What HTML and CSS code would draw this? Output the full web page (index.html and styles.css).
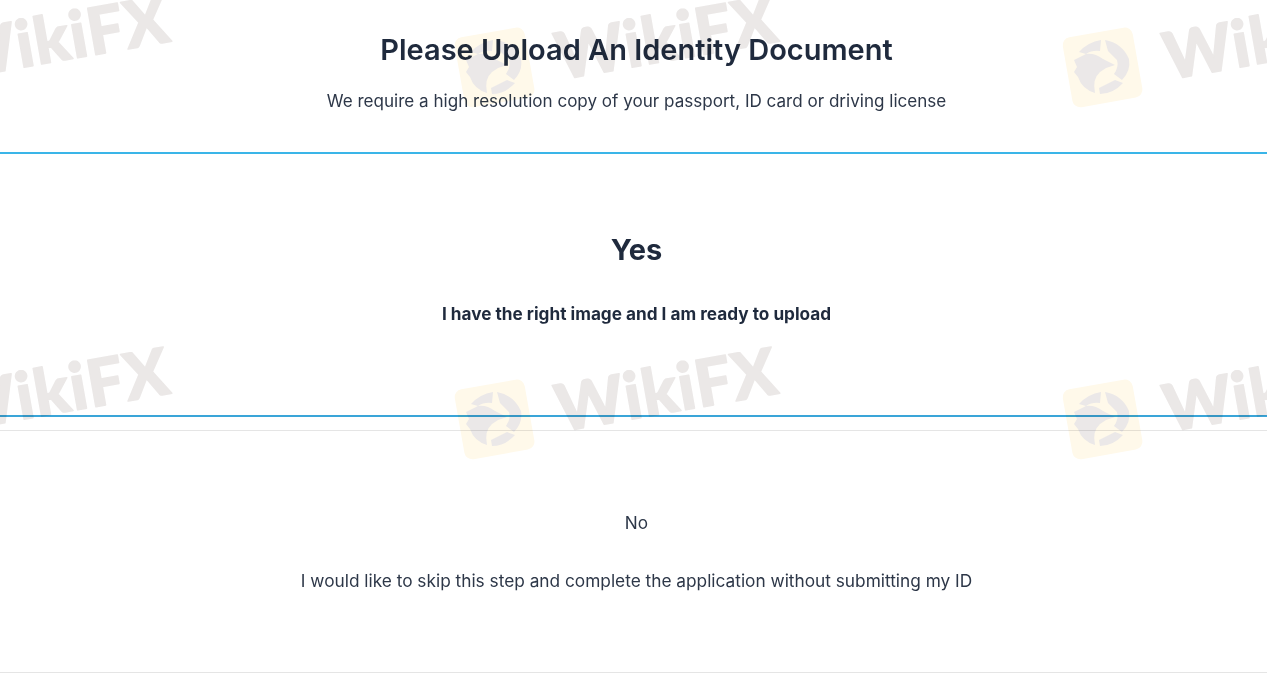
FILE: index.html
```html
<!DOCTYPE html>
<html lang="en">
<head>
<meta charset="utf-8">
<title>Please Upload An Identity Document</title>
<link rel="stylesheet" href="styles.css">
</head>
<body>
<main class="page">
  <header class="intro">
    <h1 class="intro-title">Please Upload An Identity Document</h1>
    <p class="intro-text">We require a high resolution copy of your passport, ID card or driving license</p>
  </header>
  <section class="choice choice-active">
    <h2 class="choice-title">Yes</h2>
    <p class="choice-text">I have the right image and I am ready to upload</p>
  </section>
  <section class="choice choice-plain">
    <h2 class="choice-title">No</h2>
    <p class="choice-text">I would like to skip this step and complete the application without submitting my ID</p>
  </section>
</main>
<svg class="watermark" width="1267" height="696" viewBox="0 0 1267 696" aria-hidden="true">
  <defs>
    <g id="wm">
      <rect x="5" y="5" width="71" height="71" rx="8" fill="#fff9ea" transform="rotate(-10 40 40)"/>
      <g fill="#ebe8e8">
        <path d="M17 25 Q26 15 39 13 L38 24 Q30 23 24 27 Z"/>
        <path d="M43 13 Q60 16 67 32 Q69 44 60 53 L52 47 Q57 40 55 33 L46 24 Z"/>
        <path d="M61 56 Q51 67 38 67 L37 61 L53 53 Z"/>
        <path d="M12 33 L24 27 Q33 26 41 32 L53 38 L44 41 L38 45 Q30 52 33 66 Q20 62 16 50 L12 45 L15 40 Z"/>
      </g>
      <text class="wm-text" x="106" y="53" transform="rotate(-10 106 53)">WikiFX</text>
    </g>
  </defs>
  <use href="#wm" x="-154" y="27"/>
  <use href="#wm" x="454" y="27"/>
  <use href="#wm" x="1062" y="27"/>
  <use href="#wm" x="-154" y="379"/>
  <use href="#wm" x="454" y="379"/>
  <use href="#wm" x="1062" y="379"/>
</svg>
</body>
</html>
```
FILE: styles.css
```css
html, body { margin: 0; padding: 0; background: #fff; }
body { width: 1267px; height: 696px; overflow: hidden; position: relative; font-family: Inter, "Liberation Sans", sans-serif; color: #1f2a3d; }
.page { display: flex; flex-direction: column; }
.intro { height: 152px; border-bottom: 2px solid #3ab5e8; text-align: center; padding-left: 6px; }
.intro-title { margin: 0; padding-top: 32px; font-size: 29px; line-height: 36px; font-weight: 600; }
.intro-text { margin: 0; padding-top: 19px; font-size: 17.07px; line-height: 28px; font-weight: 400; color: #2d3748; }
.choice { text-align: center; box-sizing: border-box; padding-left: 6px; }
.choice-title { margin: 0; }
.choice-text { margin: 0; font-size: 17.2px; line-height: 28px; }
.choice-active { height: 263px; border-bottom: 2px solid #3aa5d8; padding-top: 78px; }
.choice-active .choice-title { font-size: 29px; line-height: 36px; font-weight: 700; }
.choice-active .choice-text { margin-top: 32px; font-weight: 700; }
.choice-plain { height: 243px; margin-top: 13px; border-top: 1px solid #e5e5e5; border-bottom: 1px solid #e5e5e5; padding-top: 78px; color: #2d3748; }
.choice-plain .choice-title { font-size: 17.2px; line-height: 28px; font-weight: 400; }
.choice-plain .choice-text { margin-top: 30px; font-size: 17.27px; }
.watermark { position: absolute; left: 0; top: 0; pointer-events: none; mix-blend-mode: multiply; }
.wm-text { font-family: Lato, Inter, sans-serif; font-weight: 900; font-size: 65px; fill: #ebe8e7; stroke: #ebe8e7; stroke-width: 1.5px; stroke-linejoin: round; letter-spacing: 1px; }
```
